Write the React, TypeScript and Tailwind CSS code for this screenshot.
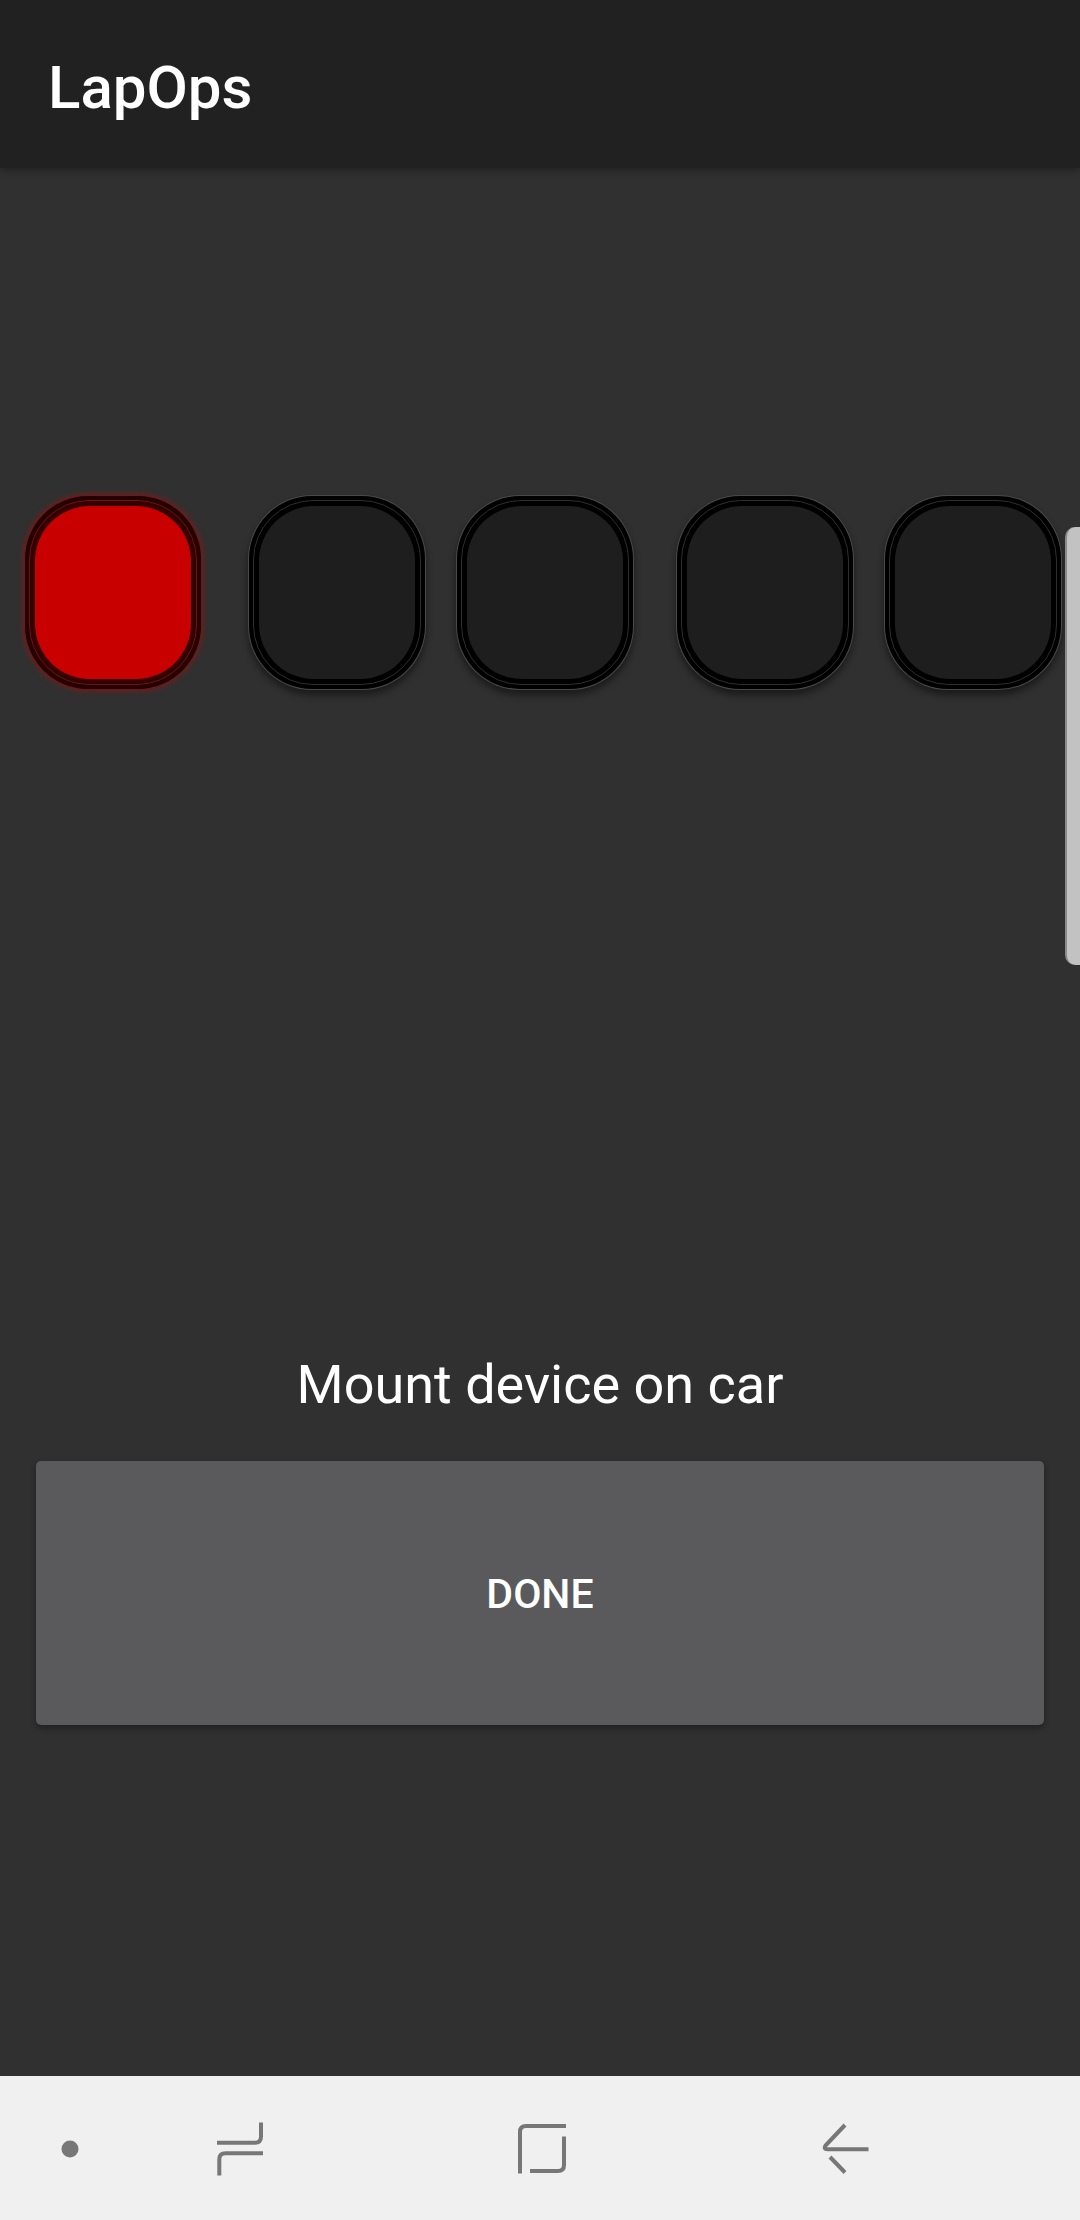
import React from 'react';

const lights = [
  { on: true, ml: 'ml-[24px]' },
  { on: false, ml: 'ml-[46px]' },
  { on: false, ml: 'ml-[30px]' },
  { on: false, ml: 'ml-[42px]' },
  { on: false, ml: 'ml-[30px]' },
];

function Light({ on, ml }: { on: boolean; ml: string }) {
  if (on) {
    return (
      <div
        className={`${ml} h-[195px] w-[178px] shrink-0 rounded-[64px] border border-[#a02828]/60 bg-[#240000] p-[4px] shadow-[0_0_7px_rgba(220,0,0,0.45)]`}
      >
        <div className="h-full rounded-[60px] border border-[#6a1414] bg-[#340000] p-[5px]">
          <div className="h-full rounded-[55px] bg-[#c80000]" />
        </div>
      </div>
    );
  }
  return (
    <div
      className={`${ml} h-[195px] w-[178px] shrink-0 rounded-[64px] border border-[#7a7a7a]/60 bg-black p-[4px] shadow-[0_5px_7px_rgba(0,0,0,0.45)]`}
    >
      <div className="h-full rounded-[60px] border border-[#2e2e2e] bg-black p-[5px]">
        <div className="h-full rounded-[55px] bg-[#1e1e1e]" />
      </div>
    </div>
  );
}

export default function App() {
  return (
    <div className="flex h-[2220px] w-[1080px] flex-col bg-[#303030] font-['Roboto',sans-serif]">
      {/* Toolbar */}
      <div className="relative z-10 h-[168px] shrink-0 bg-[#212121] pl-[48px] pt-[53px] shadow-[0_2px_8px_rgba(0,0,0,0.35)]">
        <h1 className="text-[60px] font-medium leading-[70px] text-white">LapOps</h1>
      </div>

      {/* Content */}
      <div className="relative flex flex-1 flex-col">
        <div className="mt-[327px] flex">
          {lights.map((l, i) => (
            <Light key={i} on={l.on} ml={l.ml} />
          ))}
        </div>

        <p className="mt-[664px] text-center text-[54px] leading-[62px] text-white">Mount device on car</p>

        <button className="mx-[36px] mt-[45px] h-[264px] rounded-[5px] bg-[#5a5a5c] pt-[4px] text-[41px] font-medium text-white shadow-[0_3px_6px_rgba(0,0,0,0.35)]">
          DONE
        </button>

        {/* edge panel handle */}
        <div className="absolute right-0 top-[359px] h-[438px] w-[15px] rounded-l-[10px] border-l-2 border-[#8a8a8a] bg-[#c2c2c2]" />
      </div>

      {/* Navigation bar */}
      <div className="flex h-[144px] shrink-0 items-start bg-[#f0f0f0] pt-[34px]">
        <svg className="ml-[30px]" width="80" height="80" viewBox="0 0 80 80">
          <circle cx="40" cy="39" r="8.5" fill="#777777" />
        </svg>
        <svg className="ml-[90px]" width="80" height="80" viewBox="0 0 80 80" fill="none" stroke="#777777" strokeWidth="4">
          <path d="M61 12.5 V26.5 Q61 32.7 55 32.7 H17" />
          <path d="M63 43.3 H25.5 Q19.3 43.3 19.3 49.5 V65.5" />
        </svg>
        <svg className="ml-[225px]" width="80" height="80" viewBox="0 0 80 80" fill="none" stroke="#777777" strokeWidth="4">
          <path d="M15 63.5 V22 Q15 16 21 16 H61" />
          <path d="M59 26.5 V55 Q59 61 53 61 H25" />
        </svg>
        <svg className="ml-[225px]" width="80" height="80" viewBox="0 0 80 80" fill="none" stroke="#777777" strokeWidth="4">
          <path d="M35 15 L15.5 35.5 Q13 39.3 17.5 39.3 H58.5" />
          <path d="M20 47 L35 62.5" />
        </svg>
      </div>
    </div>
  );
}
